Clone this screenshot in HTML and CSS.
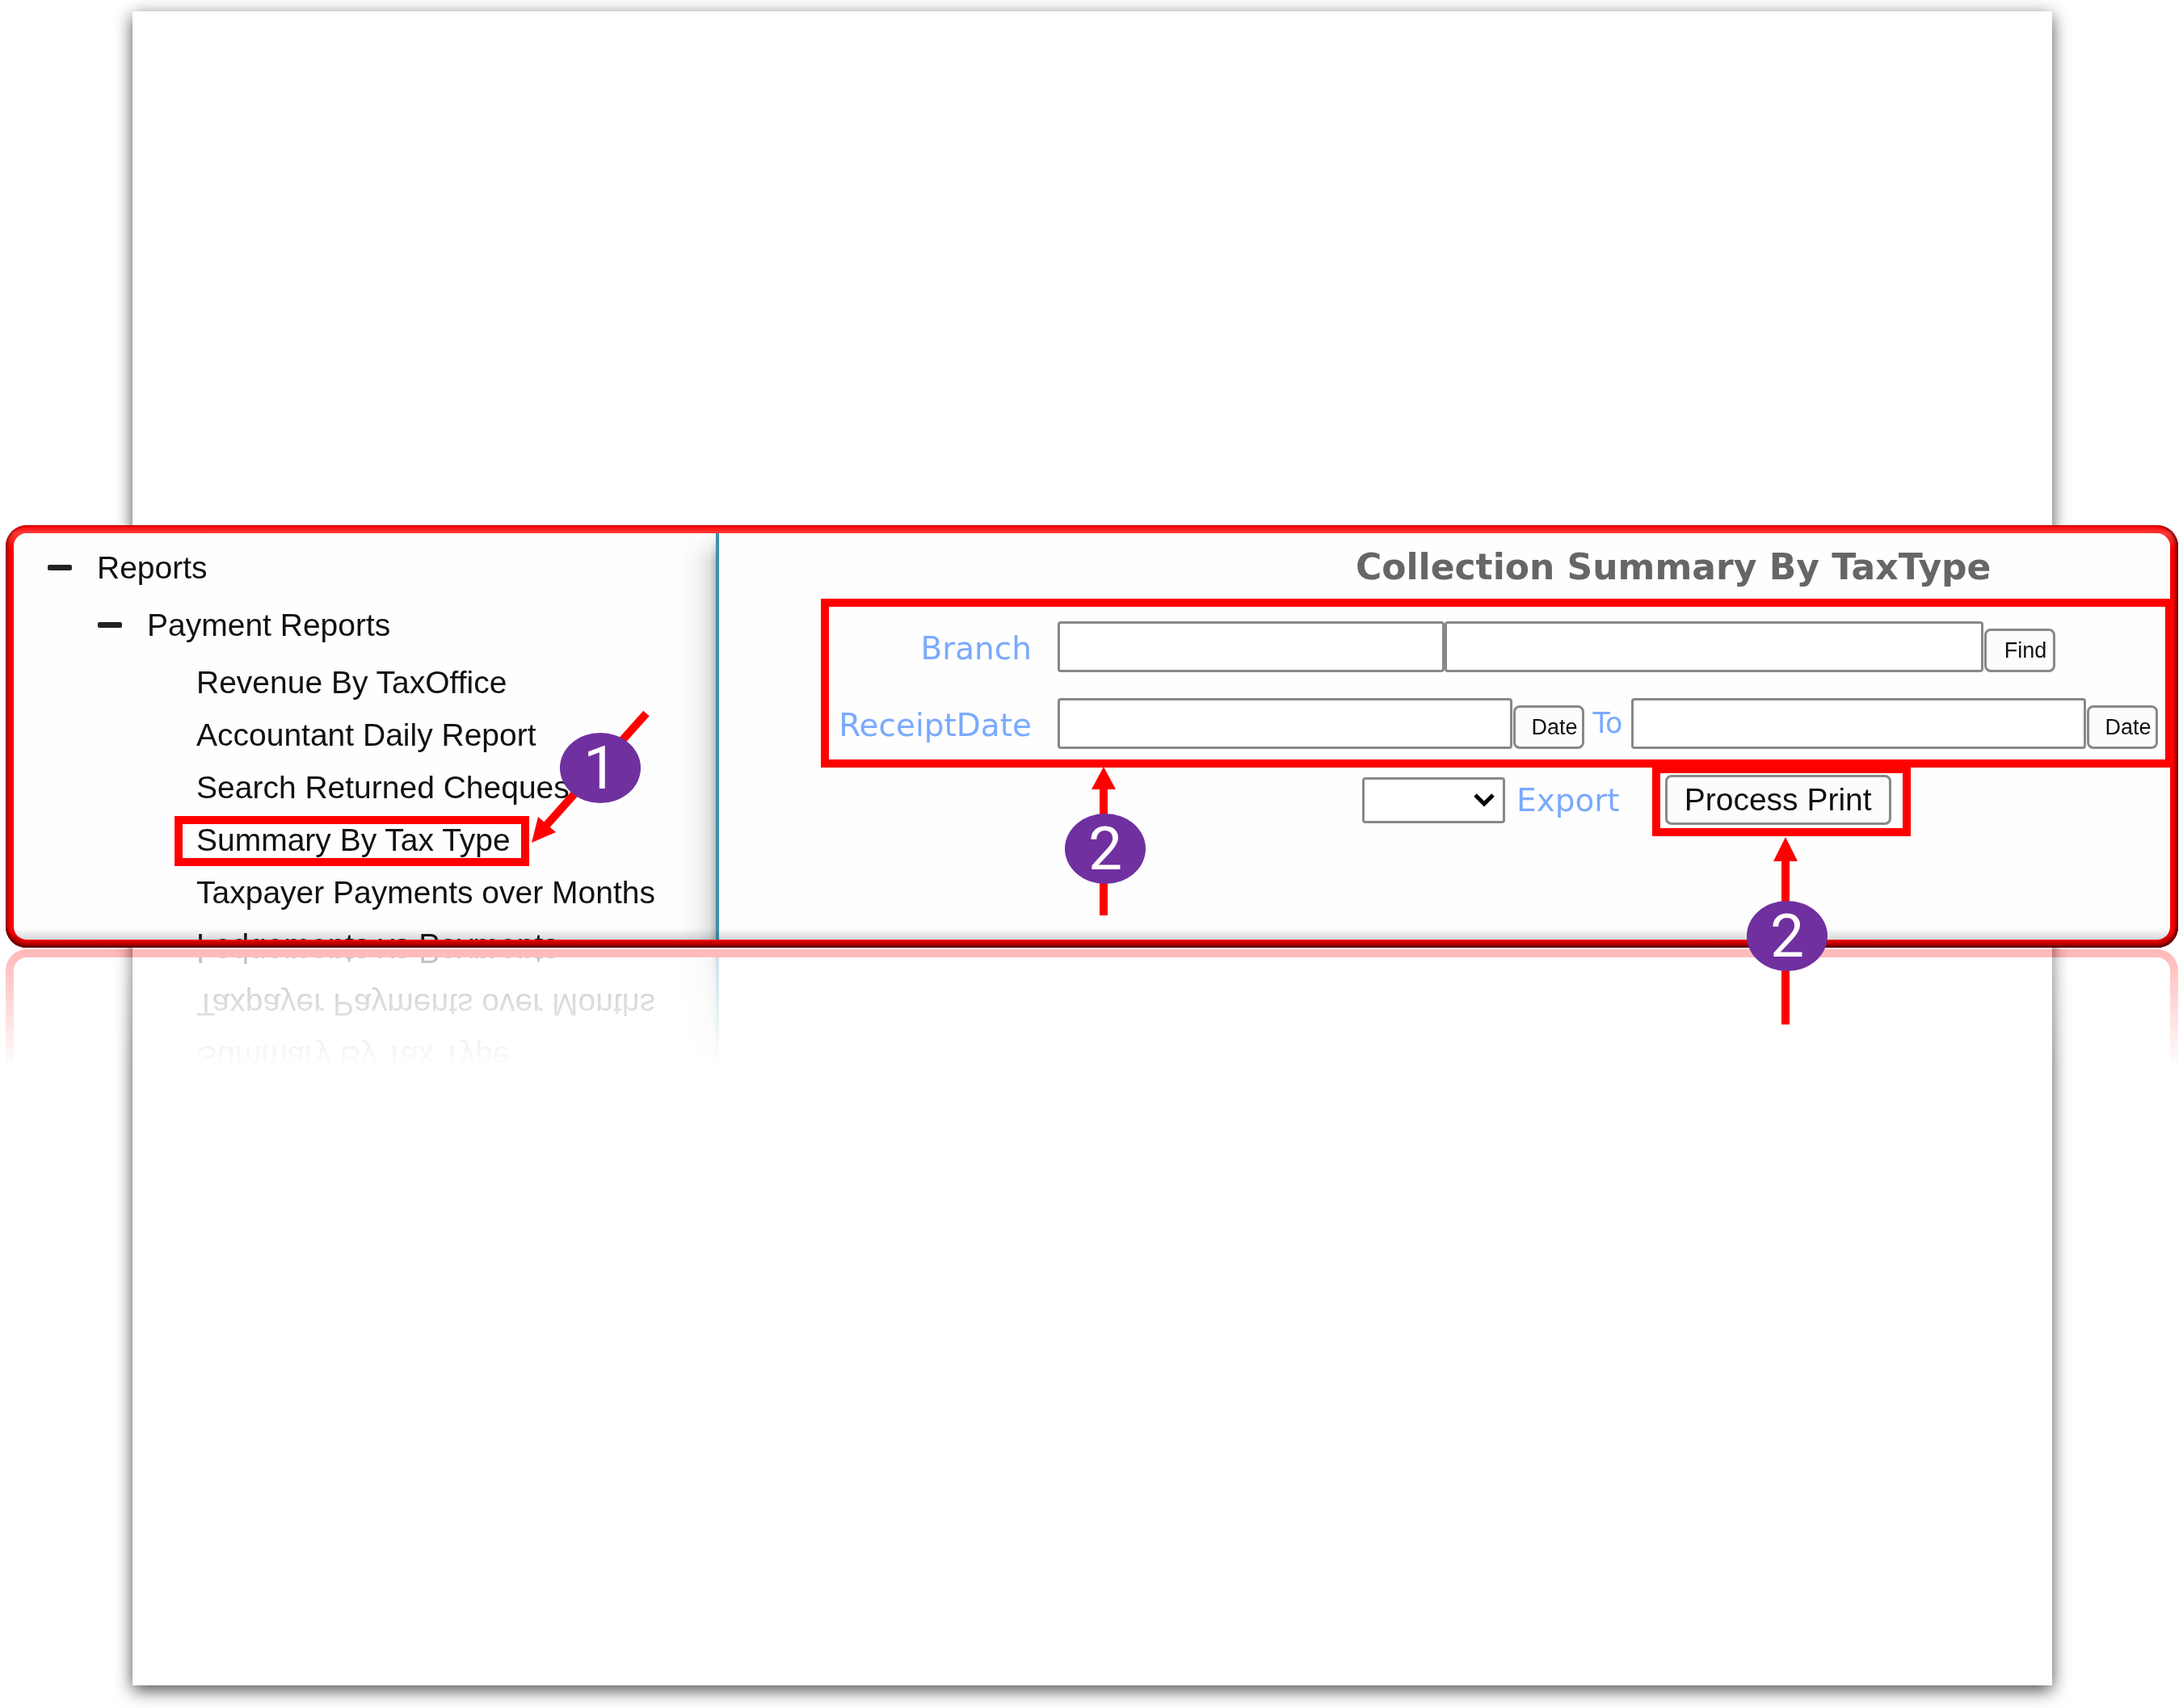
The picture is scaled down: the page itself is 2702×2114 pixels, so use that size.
FILE: index.html
```html
<!DOCTYPE html>
<html lang="en">
<head>
<meta charset="utf-8">
<title>Collection Summary By TaxType</title>
<link rel="stylesheet" href="styles.css">
</head>
<body>
<div class="page">
  <div class="sheet"></div>
  <div class="figure">
    <main class="card">
      <div class="panel">
        <nav class="tree" aria-label="Reports">
          <div class="node node-root"><span class="toggle"></span>Reports</div>
          <div class="node node-group"><span class="toggle"></span>Payment Reports</div>
          <ul class="leaves">
            <li><a href="#">Revenue By TaxOffice</a></li>
            <li><a href="#">Accountant Daily Report</a></li>
            <li><a href="#">Search Returned Cheques</a></li>
            <li><a href="#">Summary By Tax Type</a></li>
            <li><a href="#">Taxpayer Payments over Months</a></li>
            <li><a href="#">Lodgements vs Payments</a></li>
          </ul>
        </nav>
        <form class="form">
          <h1 class="title">Collection Summary By TaxType</h1>
          <div class="row">
            <label class="label" for="branch">Branch</label>
            <div class="fields">
              <input class="box box-code" id="branch" type="text">
              <input class="box box-name" type="text" aria-label="Branch name">
              <button class="mini" type="button">Find</button>
            </div>
          </div>
          <div class="row">
            <label class="label" for="from">ReceiptDate</label>
            <div class="fields">
              <input class="box box-date" id="from" type="text">
              <button class="mini" type="button">Date</button>
              <label class="to" for="until">To</label>
              <input class="box box-date" id="until" type="text">
              <button class="mini" type="button">Date</button>
            </div>
          </div>
          <div class="actions">
            <span class="picker">
              <select class="select" id="export"><option></option></select>
              <svg class="chevron" viewBox="0 0 28 20" aria-hidden="true"><path d="M3 4 L14 15 L25 4" fill="none" stroke="#000" stroke-width="5"/></svg>
            </span>
            <label class="export" for="export">Export</label>
            <button class="process" type="button">Process Print</button>
          </div>
        </form>
      </div>
    </main>
    <div class="bevel"></div>
    <div class="notes">
      <div class="frame frame-item"></div>
      <div class="frame frame-fields"></div>
      <div class="frame frame-process"></div>
      <svg class="arrows" aria-hidden="true">
        <path d="M793 233 L667 374" stroke="#f00" stroke-width="10"/>
        <path d="M651 393 L659 361 L681 380 Z" fill="#f00"/>
        <path d="M1359 483 V325" stroke="#f00" stroke-width="10"/>
        <path d="M1359 299 L1374 327 H1344 Z" fill="#f00"/>
        <path d="M2203 618 V412" stroke="#f00" stroke-width="10"/>
        <path d="M2203 386 L2218 416 H2188 Z" fill="#f00"/>
      </svg>
      <span class="badge badge-item">1</span>
      <span class="badge badge-fields">2</span>
      <span class="badge badge-process">2</span>
    </div>
  </div>
</div>
</body>
</html>
```

FILE: styles.css
```css
* { box-sizing: border-box; }

body {
  margin: 0;
  background: #fff;
  font-family: "Liberation Sans", Arial, sans-serif;
  color: #111;
}

.page {
  display: grid;
  grid-template-columns: minmax(0, 1fr);
  min-height: 100vh;
  overflow: hidden;
}

.sheet {
  grid-area: 1 / 1;
  margin: 14px 162px 28px 164px;
  background: #fff;
  box-shadow: 0 6px 20px rgba(0, 0, 0, 0.7);
}

.figure {
  grid-area: 1 / 1;
  position: relative;
  align-self: start;
  margin: 650px 6px 0 7px;
}

/* red border with a fading reflection underneath */
.card {
  padding: 10px;
  border-radius: 26px;
  background: linear-gradient(#f00 0, #ff3b3b 10px, #f00 30px);
  -webkit-box-reflect: below 2px linear-gradient(transparent 72%, rgba(255, 0, 0, 0.28));
}

/* shading of the border and of the panel's lower edge, left out of the reflection */
.bevel {
  position: absolute;
  inset: 0;
  border-radius: 26px;
  background: linear-gradient(transparent, rgba(20, 40, 50, 0.18)) 10px calc(100% - 10px) / calc(100% - 20px) 14px no-repeat;
  box-shadow:
    inset 0 -2px 2px #600,
    inset 0 -5px 4px -1px rgba(90, 0, 0, 0.7),
    inset 0 -10px 0 -1px rgba(160, 0, 0, 0.4),
    inset 4px 0 4px -1px rgba(110, 0, 0, 0.6),
    inset -4px 0 4px -1px rgba(80, 0, 0, 0.8);
  clip-path: inset(0);
  pointer-events: none;
}

.panel {
  display: grid;
  grid-template-columns: 873px minmax(0, 1fr);
  height: 503px;
  border-radius: 16px;
  overflow: hidden;
  background: #fefefe;
}

.tree {
  border-right: 4px solid #3f8fa8;
  padding: 7px 0 0 42px;
  font-size: 39px;
  background:
    linear-gradient(#fefefe, rgba(254, 254, 254, 0) 36px),
    linear-gradient(to left, #bbb 0, #e2e2e2 8px, #f3f3f3 22px, transparent 46px);
}

.node {
  display: flex;
  align-items: center;
  gap: 31px;
  line-height: 71px;
}

.node-group { padding-left: 62px; }

.toggle {
  width: 30px;
  height: 7px;
  border-radius: 2px;
  background: #222;
}

.leaves {
  margin: 3px 0 0;
  padding: 0 0 0 184px;
  list-style: none;
  line-height: 65px;
  white-space: nowrap;
}

.leaves a {
  color: inherit;
  text-decoration: none;
}

.form {
  display: flex;
  flex-direction: column;
  font-family: "DejaVu Sans", Verdana, sans-serif;
}

.title {
  margin: 0 0 25px 788px;
  color: #666;
  font-size: 44px;
  line-height: 84px;
  white-space: nowrap;
}

.row {
  display: flex;
  align-items: center;
  gap: 32px;
  margin-bottom: 32px;
}

.label {
  width: 387px;
  padding-top: 4px;
  text-align: right;
}

.label, .export {
  color: #7aaaff;
  font-size: 39px;
}

.fields {
  display: flex;
  align-items: flex-end;
}

.box {
  height: 63px;
  border: 3px solid #888;
  border-radius: 4px;
  background: #fff;
}

.box-code { width: 479px; }
.box-name { width: 667px; }
.box-date { width: 563px; }

.mini {
  width: 88px;
  height: 54px;
  margin-left: 1px;
  padding: 0 4px 0 18px;
  border: 3px solid #888;
  border-radius: 8px;
  background: #fcfcfc;
  color: #111;
  font: 27px "Liberation Sans", Arial, sans-serif;
}

.to {
  width: 58px;
  color: #7aaaff;
  font-size: 35px;
  line-height: 63px;
  text-align: center;
}

.actions {
  display: flex;
  align-items: center;
  margin-left: 796px;
}

.picker {
  position: relative;
  width: 177px;
}

.select {
  display: block;
  width: 100%;
  height: 57px;
  appearance: none;
  border: 3px solid #888;
  border-radius: 4px;
  background: #fff;
}

.chevron {
  position: absolute;
  right: 12px;
  top: 18px;
  width: 28px;
  height: 20px;
  pointer-events: none;
}

.export { margin-left: 14px; }

.process {
  width: 280px;
  height: 62px;
  margin-left: 56px;
  padding: 0;
  border: 3px solid #888;
  border-radius: 8px;
  background: #fcfcfc;
  color: #111;
  font: 39px "Liberation Sans", Arial, sans-serif;
}

/* callouts laid over the card */
.notes {
  position: absolute;
  inset: 0;
  pointer-events: none;
}

.frame {
  position: absolute;
  border: 10px solid #f00;
}

.frame-item { left: 209px; top: 360px; width: 439px; height: 62px; }
.frame-fields { left: 1009px; top: 91px; right: 6px; height: 209px; }
.frame-process { left: 2038px; top: 297px; width: 320px; height: 88px; }

.arrows {
  position: absolute;
  inset: 0;
  width: 100%;
  height: 100%;
  overflow: visible;
}

.badge {
  position: absolute;
  width: 100px;
  height: 87px;
  border-radius: 50%;
  background: #7030a0;
  color: #fff;
  font-family: Roboto, "Liberation Sans", sans-serif;
  font-size: 75px;
  line-height: 87px;
  text-align: center;
}

.badge-item { left: 686px; top: 257px; }
.badge-fields { left: 1311px; top: 357px; }
.badge-process { left: 2155px; top: 465px; }
```
